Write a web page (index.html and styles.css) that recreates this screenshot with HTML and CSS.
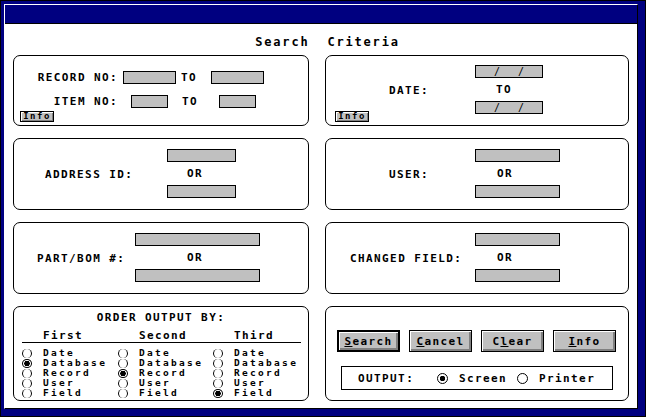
FILE: index.html
```html
<!DOCTYPE html>
<html lang="en">
  <head>
    <meta charset="UTF-8" />
    <meta name="viewport" content="width=device-width, initial-scale=1.0" />
    <title>Search Criteria</title>
    <link rel="stylesheet" href="styles.css">
  </head>
  <body>
    <div class="window">
      <div class="frame">
        <div class="titlebar"></div>

        <main class="content">
          <h1 class="heading">Search&nbsp;&nbsp;Criteria</h1>

          <div class="panels">
            <section class="panel panel-record">
              <div class="range-row row-record">
                <span class="lbl">RECORD NO:</span>
                <input type="text" class="field" />
                <span class="to">TO</span>
                <input type="text" class="field" />
              </div>
              <div class="range-row row-item">
                <span class="lbl">ITEM NO:</span>
                <input type="text" class="field" />
                <span class="to">TO</span>
                <input type="text" class="field" />
              </div>
              <button type="button" class="info-btn">Info</button>
            </section>

            <section class="panel panel-date">
              <button type="button" class="info-btn">Info</button>
              <span class="lbl">DATE:</span>
              <div class="fields">
                <div class="field field-date"><span>/</span><span>/</span></div>
                <span class="or">TO</span>
                <div class="field field-date"><span>/</span><span>/</span></div>
              </div>
            </section>

            <section class="panel pair pair-address">
              <span class="lbl">ADDRESS ID:</span>
              <div class="fields">
                <input type="text" class="field" />
                <span class="or">OR</span>
                <input type="text" class="field" />
              </div>
            </section>

            <section class="panel pair pair-user">
              <span class="lbl">USER:</span>
              <div class="fields">
                <input type="text" class="field" />
                <span class="or">OR</span>
                <input type="text" class="field" />
              </div>
            </section>

            <section class="panel pair pair-part">
              <span class="lbl">PART/BOM #:</span>
              <div class="fields">
                <input type="text" class="field" />
                <span class="or">OR</span>
                <input type="text" class="field" />
              </div>
            </section>

            <section class="panel pair pair-changed">
              <span class="lbl">CHANGED FIELD:</span>
              <div class="fields">
                <input type="text" class="field" />
                <span class="or">OR</span>
                <input type="text" class="field" />
              </div>
            </section>

            <section class="panel order">
              <div class="order-title">ORDER OUTPUT BY:</div>
              <div class="order-grid">
                <div class="order-col">
                  <div class="order-head">First</div>
                  <label class="opt"><span class="paren"></span>Date</label>
                  <label class="opt"><span class="paren on"></span>Database</label>
                  <label class="opt"><span class="paren"></span>Record</label>
                  <label class="opt"><span class="paren"></span>User</label>
                  <label class="opt"><span class="paren"></span>Field</label>
                </div>
                <div class="order-col">
                  <div class="order-head">Second</div>
                  <label class="opt"><span class="paren"></span>Date</label>
                  <label class="opt"><span class="paren"></span>Database</label>
                  <label class="opt"><span class="paren on"></span>Record</label>
                  <label class="opt"><span class="paren"></span>User</label>
                  <label class="opt"><span class="paren"></span>Field</label>
                </div>
                <div class="order-col">
                  <div class="order-head">Third</div>
                  <label class="opt"><span class="paren"></span>Date</label>
                  <label class="opt"><span class="paren"></span>Database</label>
                  <label class="opt"><span class="paren"></span>Record</label>
                  <label class="opt"><span class="paren"></span>User</label>
                  <label class="opt"><span class="paren on"></span>Field</label>
                </div>
              </div>
            </section>

            <section class="panel actions">
              <div class="buttons">
                <button type="button" class="btn btn-default"><u>S</u>earch</button>
                <button type="button" class="btn"><u>C</u>ancel</button>
                <button type="button" class="btn">C<u>l</u>ear</button>
                <button type="button" class="btn"><u>I</u>nfo</button>
              </div>
              <div class="output-box">
                <span class="out-lbl">OUTPUT:</span>
                <span class="dot on"></span>
                <span class="dot-text">Screen</span>
                <span class="dot"></span>
                <span class="dot-text">Printer</span>
              </div>
            </section>
          </div>
        </main>
      </div>
    </div>
  </body>
</html>
```

FILE: styles.css
```css
* {
  margin: 0;
  padding: 0;
  box-sizing: border-box;
}

body {
  background-color: #000080;
  color: #000;
  font-family: "DejaVu Sans Mono", "Liberation Mono", monospace;
  font-size: 11px;
  font-weight: bold;
  letter-spacing: 1.4px;
}

.window {
  width: 646px;
  height: 417px;
  background-color: #000080;
  border: 1px solid #000;
  padding: 3px 7px 7px 3px;
}

.frame {
  height: 100%;
  display: flex;
  flex-direction: column;
  border-top: 1px solid #fff;
  border-left: 1px solid #fff;
  border-right: 1px solid #000;
  border-bottom: 1px solid #000;
}

.titlebar {
  height: 19px;
  flex-shrink: 0;
  background-color: #000080;
  border-bottom: 1px solid #000;
}

.content {
  flex: 1;
  background-color: #fff;
  padding: 10px 7px 0 8px;
  white-space: nowrap;
}

.heading {
  font-size: 12px;
  letter-spacing: 1.8px;
  line-height: 16px;
  text-align: center;
  padding-left: 12px;
  margin-bottom: 5px;
}

.panels {
  display: grid;
  grid-template-columns: 296px 304px;
  grid-template-rows: 71px 72px 72px 95px;
  column-gap: 16px;
  row-gap: 12px;
}

.panel {
  border: 1px solid #000;
  border-radius: 7px;
}

/* gray entry boxes */
.field {
  display: block;
  height: 13px;
  border: 1px solid #000;
  background-color: #c0c0c0;
  font: inherit;
  font-size: 10px;
  letter-spacing: 2px;
  color: #000;
  outline: none;
}

.field-date {
  display: flex;
  justify-content: center;
  gap: 16px;
  padding-left: 2px;
  line-height: 11px;
  font-weight: normal;
}

.info-btn {
  display: block;
  width: 34px;
  height: 11px;
  border: 1px solid #000;
  background-color: #c0c0c0;
  box-shadow: inset 1px 1px 0 #fff, inset -1px -1px 0 #808080;
  font-family: inherit;
  font-weight: bold;
  font-size: 9px;
  letter-spacing: 1.5px;
  line-height: 9px;
  color: #000;
  text-align: center;
}

/* record / item ranges */
.panel-record {
  padding: 15px 0 0 6px;
}

.range-row {
  display: flex;
  align-items: center;
  height: 13px;
  padding-left: 17px;
}

.range-row .lbl {
  width: 81px;
  text-align: right;
}

.to {
  width: 16px;
}

.row-record .field { width: 53px; }
.row-record .lbl + .field { margin-left: 5px; }
.row-record .to { margin: 0 14px 0 5px; }

.row-item { margin-top: 11px; }
.row-item .field { width: 37px; }
.row-item .lbl + .field { margin-left: 13px; }
.row-item .to { margin: 0 21px 0 14px; }

.panel-record .info-btn {
  margin-top: 3px;
}

/* date */
.panel-date {
  display: grid;
  grid-template-columns: 34px 106px 68px;
  padding-left: 9px;
}

.panel-date .info-btn {
  align-self: end;
  margin-bottom: 3px;
}

.panel-date .lbl {
  align-self: center;
  padding-left: 20px;
}

.fields {
  display: flex;
  flex-direction: column;
}

.panel-date .fields { padding-top: 9px; }
.panel-date .or { margin-left: 21px; }

.or {
  height: 23px;
  line-height: 23px;
}

/* label + two boxes */
.pair {
  display: grid;
}

.pair .lbl {
  align-self: center;
}

.pair .fields {
  padding-top: 10px;
}

.pair-address { grid-template-columns: 122px 69px; padding-left: 31px; }
.pair-address .or { margin-left: 20px; }

.pair-user { grid-template-columns: 86px 85px; padding-left: 63px; }
.pair-user .or { margin-left: 22px; }

.pair-part { grid-template-columns: 98px 125px; padding-left: 23px; }
.pair-part .or { margin-left: 52px; }

.pair-changed { grid-template-columns: 125px 85px; padding-left: 24px; }
.pair-changed .or { margin-left: 22px; }

/* order output */
.order {
  padding-top: 6px;
}

.order-title {
  text-align: center;
  line-height: 10px;
}

.order-grid {
  display: grid;
  grid-template-columns: 96px 95px 88px;
  margin: 7px 0 0 8px;
}

.order-head {
  height: 13px;
  line-height: 11px;
  padding-left: 21px;
  border-bottom: 1px solid #000;
  margin-bottom: 5px;
}

.opt {
  display: flex;
  align-items: center;
  height: 10px;
  font-size: 9.5px;
  letter-spacing: 2.3px;
  line-height: 10px;
}

.paren {
  width: 10px;
  height: 9px;
  margin-right: 11px;
  border-radius: 50%;
  border-left: 1px solid #000;
  border-right: 1px solid #000;
}

.paren.on {
  border: 1px solid #000;
  background: radial-gradient(circle, #000 0 2.5px, #fff 3px);
}

/* buttons + output */
.actions {
  padding: 23px 0 0 11px;
}

.buttons {
  display: flex;
  gap: 9px;
}

.btn {
  width: 63px;
  height: 22px;
  border: 1px solid #000;
  background-color: #c0c0c0;
  box-shadow: inset 1px 1px 0 #fff, inset -2px -2px 0 #808080;
  font: inherit;
  letter-spacing: inherit;
  color: #000;
}

.btn-default {
  border-width: 2px;
}

.output-box {
  display: flex;
  align-items: center;
  width: 272px;
  height: 24px;
  margin: 14px 0 0 4px;
  padding-left: 16px;
  border: 1px solid #000;
}

.out-lbl {
  width: 56px;
}

.dot {
  width: 11px;
  height: 11px;
  border: 1px solid #000;
  border-radius: 50%;
  margin-left: 10px;
}

.out-lbl + .dot {
  margin-left: 23px;
}

.dot.on {
  background: radial-gradient(circle, #000 0 2.5px, #fff 3px);
}

.dot-text {
  width: 48px;
  margin-left: 11px;
}
```
